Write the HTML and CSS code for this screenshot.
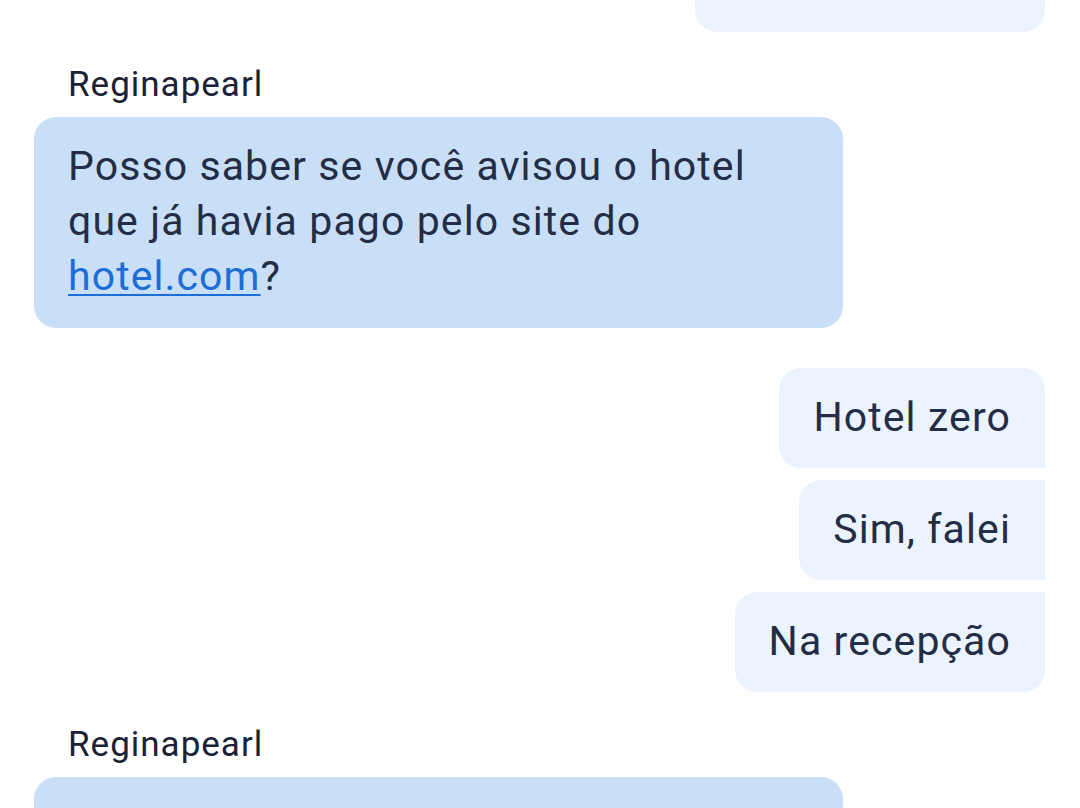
FILE: index.html
```html
<!DOCTYPE html>
<html lang="pt">
<head>
<meta charset="utf-8">
<link rel="stylesheet" href="styles.css">
</head>
<body>
<div class="chat">
  <div class="bubble out last top-cut"></div>

  <div class="sender">Reginapearl</div>
  <div class="bubble in">Posso saber se você avisou o hotel que já havia pago pelo site do <a class="link" href="#">hotel.com</a>?</div>

  <div class="bubble out first group-start">Hotel zero</div>
  <div class="bubble out middle">Sim, falei</div>
  <div class="bubble out last">Na recepção</div>

  <div class="sender">Reginapearl</div>
  <div class="bubble in wide"></div>
</div>
</body>
</html>
```

FILE: styles.css
```css
html, body {
  margin: 0;
  padding: 0;
  background: #ffffff;
  overflow: hidden;
}

body {
  width: 1080px;
  height: 808px;
  font-family: Roboto, "Noto Sans", sans-serif;
  color: #232d46;
}

.chat {
  display: flex;
  flex-direction: column;
  padding: 0 35px 0 34px;
}

.sender {
  font-size: 35px;
  letter-spacing: 1px;
  line-height: 40px;
  color: #1b2236;
  padding-left: 34px;
  margin-top: 33px;
  margin-bottom: 12px;
}

.bubble {
  font-size: 41px;
  letter-spacing: 1.1px;
  line-height: 55px;
  padding: 22px 34px 23px;
  border-radius: 22px;
  max-width: 809px;
  box-sizing: border-box;
}

.bubble.in {
  align-self: flex-start;
  background: #c9dff7;
  padding-bottom: 24px;
}

.bubble.in.wide {
  width: 809px;
  height: 31px;
  padding: 0;
  border-bottom-left-radius: 0;
  border-bottom-right-radius: 0;
}

.bubble.out {
  align-self: flex-end;
  background: #ebf3fe;
  margin-top: 12px;
}

.bubble.out.group-start {
  margin-top: 40px;
}

.bubble.out.first {
  border-bottom-right-radius: 0;
}

.bubble.out.middle {
  border-top-right-radius: 0;
  border-bottom-right-radius: 0;
}

.bubble.out.last {
  border-top-right-radius: 0;
}

.bubble.out.top-cut {
  width: 350px;
  height: 100px;
  margin-top: -68px;
  border-top-right-radius: 0;
}

.link {
  color: #1c6dd5;
  text-decoration: underline;
  text-decoration-thickness: 2px;
  text-underline-offset: 4px;
}
```
